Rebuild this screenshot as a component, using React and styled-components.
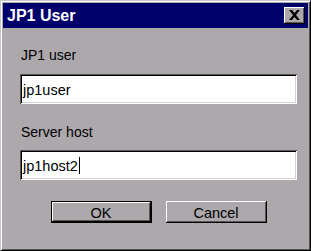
import React from 'react';
import styled, { createGlobalStyle } from 'styled-components';

const GlobalStyle = createGlobalStyle`
  html, body {
    margin: 0;
    padding: 0;
    background: #aca8ac;
  }
  * {
    box-sizing: border-box;
  }
`;

const Window = styled.div`
  width: 311px;
  height: 251px;
  background: #aca8ac;
  border: 1px solid;
  border-color: #c8c4c8 #000 #000 #c8c4c8;
  box-shadow: inset 1px 1px #fff, inset -1px -1px #585458;
  padding: 2px;
  display: flex;
  flex-direction: column;
  font-family: 'Liberation Sans', Arial, sans-serif;
`;

const TitleBar = styled.div`
  height: 25px;
  background: #00006b;
  display: flex;
  align-items: center;
  justify-content: space-between;
  padding: 0 3px 0 4px;
`;

const Title = styled.span`
  color: #fff;
  font-weight: bold;
  font-size: 16px;
  line-height: 18px;
`;

const CloseButton = styled.div`
  width: 21px;
  height: 17px;
  background: #aca8ac;
  box-shadow: inset -1px -1px #000, inset 1px 1px #fff, inset -2px -2px #585458;
  display: flex;
  align-items: center;
  justify-content: center;
  padding: 0 1px 1px 0;
`;

const Body = styled.div`
  flex: 1;
  display: flex;
  flex-direction: column;
  padding: 19px 11px 0 17px;
`;

const Label = styled.div`
  font-size: 14px;
  line-height: 16px;
  color: #000;
  padding-left: 1px;
  margin-bottom: ${(p) => p.gap}px;
`;

const Field = styled.div`
  height: 30px;
  background: #fff;
  box-shadow: inset 1px 1px #585458, inset -1px -1px #fff, inset 2px 2px #000,
    inset -2px -2px #d4d0d4;
  display: flex;
  align-items: center;
  padding: 1px 2px 0 3px;
  font-size: 14.5px;
  color: #000;
  margin-bottom: ${(p) => p.gap}px;
`;

const Caret = styled.span`
  display: inline-block;
  width: 1px;
  height: 17px;
  background: #000;
  margin-left: 1px;
`;

const ButtonRow = styled.div`
  display: flex;
  justify-content: center;
  gap: 14px;
`;

const Button = styled.div`
  width: 101px;
  height: 22px;
  background: #aca8ac;
  display: flex;
  align-items: center;
  justify-content: center;
  font-size: 14.5px;
  color: #000;
  padding-top: 1px;
  box-shadow: ${(p) =>
    p.primary
      ? 'inset 0 0 0 1px #000, inset -2px -2px #000, inset 2px 2px #fff, inset -3px -3px #585458'
      : 'inset -1px -1px #000, inset 1px 1px #fff, inset -2px -2px #585458'};
`;

const App = () => (
  <>
    <GlobalStyle />
    <Window>
      <TitleBar>
        <Title>JP1 User</Title>
        <CloseButton>
          <svg width="11" height="10" viewBox="0 0 11 10">
            <path
              d="M0 0h3l2.5 3L8 0h3L7 5l4 5H8L5.5 7 3 10H0l4-5z"
              fill="#000"
            />
          </svg>
        </CloseButton>
      </TitleBar>
      <Body>
        <Label gap={11}>JP1 user</Label>
        <Field gap={20}>jp1user</Field>
        <Label gap={10}>Server host</Label>
        <Field gap={21}>
          jp1host2
          <Caret />
        </Field>
        <ButtonRow>
          <Button primary>OK</Button>
          <Button>Cancel</Button>
        </ButtonRow>
      </Body>
    </Window>
  </>
);

export default App;
